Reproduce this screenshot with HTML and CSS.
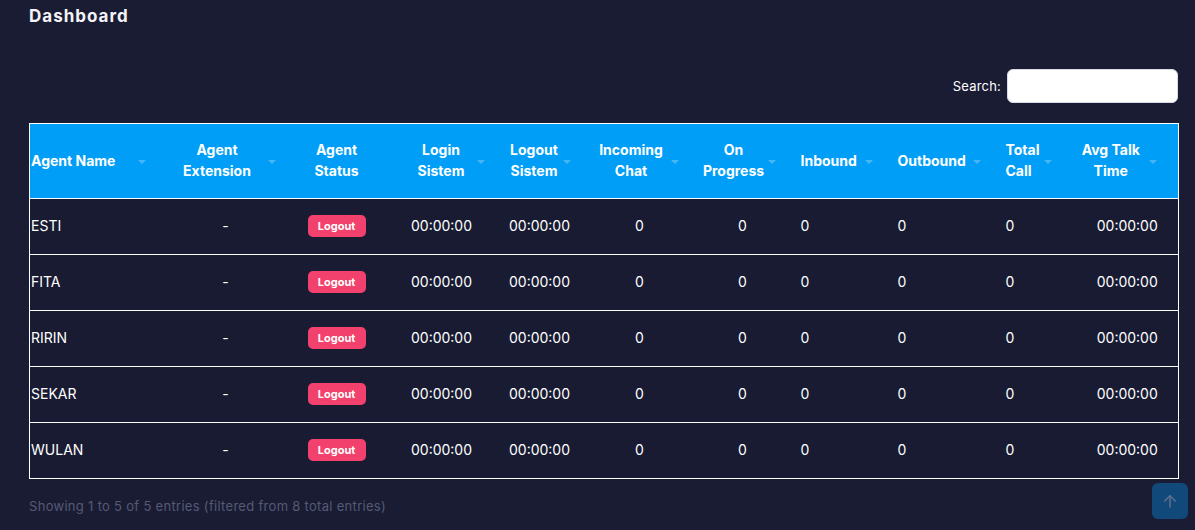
FILE: index.html
```html
<!DOCTYPE html>
<html lang="en">
<head>
<meta charset="utf-8">
<title>Dashboard</title>
<link rel="stylesheet" href="styles.css">
</head>
<body>
<div class="page">
  <h1 class="title">Dashboard</h1>
  <div class="toolbar">
    <label class="search">Search: <input type="search" class="search-input"></label>
  </div>
  <table class="grid">
    <colgroup>
      <col style="width:137px"><col style="width:130px"><col style="width:109px"><col style="width:100px"><col style="width:86px"><col style="width:108px"><col style="width:97px"><col style="width:97px"><col style="width:108px"><col style="width:71px"><col style="width:106px">
    </colgroup>
    <thead>
      <tr>
        <th class="c1 sort">Agent Name</th>
        <th class="c2 sort">Agent Extension</th>
        <th class="c3">Agent Status</th>
        <th class="c4 sort">Login Sistem</th>
        <th class="c5 sort">Logout Sistem</th>
        <th class="c6 sort">Incoming Chat</th>
        <th class="c7 sort">On Progress</th>
        <th class="c8 sort">Inbound</th>
        <th class="c9 sort">Outbound</th>
        <th class="c10 sort">Total Call</th>
        <th class="c11 sort">Avg Talk Time</th>
      </tr>
    </thead>
    <tbody>
      <tr><td class="c1">ESTI</td><td class="c2">-</td><td class="c3"><span class="badge">Logout</span></td><td class="c4">00:00:00</td><td class="c5">00:00:00</td><td class="c6">0</td><td class="c7">0</td><td class="c8">0</td><td class="c9">0</td><td class="c10">0</td><td class="c11">00:00:00</td></tr>
      <tr><td class="c1">FITA</td><td class="c2">-</td><td class="c3"><span class="badge">Logout</span></td><td class="c4">00:00:00</td><td class="c5">00:00:00</td><td class="c6">0</td><td class="c7">0</td><td class="c8">0</td><td class="c9">0</td><td class="c10">0</td><td class="c11">00:00:00</td></tr>
      <tr><td class="c1">RIRIN</td><td class="c2">-</td><td class="c3"><span class="badge">Logout</span></td><td class="c4">00:00:00</td><td class="c5">00:00:00</td><td class="c6">0</td><td class="c7">0</td><td class="c8">0</td><td class="c9">0</td><td class="c10">0</td><td class="c11">00:00:00</td></tr>
      <tr><td class="c1">SEKAR</td><td class="c2">-</td><td class="c3"><span class="badge">Logout</span></td><td class="c4">00:00:00</td><td class="c5">00:00:00</td><td class="c6">0</td><td class="c7">0</td><td class="c8">0</td><td class="c9">0</td><td class="c10">0</td><td class="c11">00:00:00</td></tr>
      <tr><td class="c1">WULAN</td><td class="c2">-</td><td class="c3"><span class="badge">Logout</span></td><td class="c4">00:00:00</td><td class="c5">00:00:00</td><td class="c6">0</td><td class="c7">0</td><td class="c8">0</td><td class="c9">0</td><td class="c10">0</td><td class="c11">00:00:00</td></tr>
    </tbody>
  </table>
  <div class="info">Showing 1 to 5 of 5 entries (filtered from 8 total entries)</div>
</div>
<button class="to-top" type="button" aria-label="Back to top">
  <svg width="18" height="18" viewBox="0 0 24 24" fill="none" stroke="currentColor" stroke-width="2.2" stroke-linecap="round" stroke-linejoin="round"><path d="M12 20V5"/><path d="M5 12l7-7 7 7"/></svg>
</button>
</body>
</html>
```
FILE: styles.css
```css
html, body {
  margin: 0;
  padding: 0;
  background: #1a1c33;
  height: 100%;
  overflow: hidden;
}
body {
  font-family: "Inter", "Noto Sans", sans-serif;
  color: #ffffff;
}
.page {
  padding: 0 17px 0 29px;
}
.title {
  margin: 0;
  padding-top: 4px;
  font-size: 17px;
  line-height: 24px;
  font-weight: 700;
  letter-spacing: 1px;
  color: #f4f4f8;
}
.toolbar {
  display: flex;
  justify-content: flex-end;
  margin-top: 41px;
  height: 34px;
}
.search {
  display: flex;
  align-items: center;
  gap: 6px;
  font-size: 13px;
  letter-spacing: 0.2px;
  color: #ffffff;
}
.search-input {
  width: 171px;
  height: 34px;
  box-sizing: border-box;
  border: 1px solid #d9dbe4;
  border-radius: 6px;
  background: #ffffff;
  margin: 0;
}
.grid {
  margin-top: 20px;
  width: 1149px;
  table-layout: fixed;
  border-collapse: collapse;
  border: 1px solid #ffffff;
  font-size: 14px;
}
.grid thead tr {
  background: #009ef7;
  border-bottom: 1px solid #ffffff;
}
.grid th {
  position: relative;
  height: 72px;
  padding: 0 30px 2px 1px;
  font-weight: 700;
  line-height: 21px;
  text-align: center;
  color: #ffffff;
}
.grid th.c1, .grid th.c8, .grid th.c9, .grid th.c10 {
  text-align: left;
}
.grid th.c8, .grid th.c9, .grid th.c10 { padding-left: 4px; }
.grid th.sort::after {
  content: "";
  position: absolute;
  right: 21px;
  top: 50%;
  margin-top: -1px;
  border-left: 4px solid transparent;
  border-right: 4px solid transparent;
  border-top: 4px solid #48b6f5;
}
.grid tbody tr {
  background: #181b32;
  border-bottom: 1px solid #ffffff;
}
.grid td {
  height: 53px;
  padding: 0 0 2px 0;
  text-align: center;
  font-size: 14px;
  color: #ffffff;
}
.grid td.c1 { text-align: left; padding-left: 1px; }
.grid td.c2 { padding-right: 12px; }
.grid td.c3 { padding-right: 29px; }
.grid td.c4 { padding-right: 28px; }
.grid td.c5 { padding-right: 18px; }
.grid td.c6 { padding-right: 12px; }
.grid td.c7 { padding-right: 11px; }
.grid td.c8, .grid td.c9, .grid td.c10 { text-align: left; padding-left: 4px; }
.grid td.c11 { padding-left: 4px; }
.badge {
  display: inline-block;
  width: 58px;
  height: 22px;
  line-height: 22px;
  border-radius: 5px;
  background: #f1416c;
  color: #ffffff;
  font-size: 11px;
  font-weight: 700;
  vertical-align: middle;
}
.info {
  margin-top: 19px;
  font-size: 13px;
  letter-spacing: 0.3px;
  color: #555a75;
}
.to-top {
  position: fixed;
  right: 7px;
  bottom: 11px;
  width: 36px;
  height: 36px;
  border: 0;
  border-radius: 6px;
  background: #11497b;
  color: #5d6e8a;
  display: flex;
  align-items: center;
  justify-content: center;
  padding: 0;
}
```
